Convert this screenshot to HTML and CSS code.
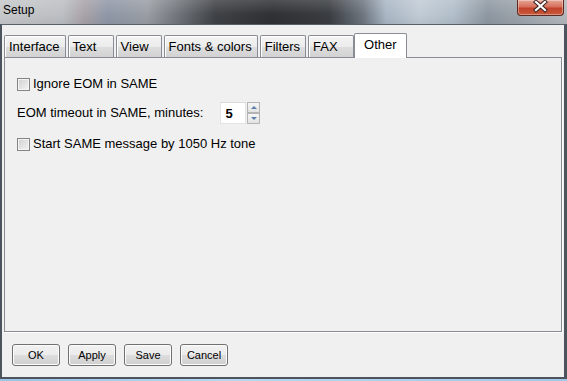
FILE: index.html
```html
<!DOCTYPE html>
<html lang="en">
<head>
    <meta charset="UTF-8">
    <title>Setup</title>
    <link rel="stylesheet" href="styles.css">
</head>
<body>
    <div class="window">
        <div class="titlebar">
            <span class="title">Setup</span>
            <div class="close">
                <svg width="47" height="16" viewBox="0 0 47 16">
                    <path d="M19 3 L28 11 M28 3 L19 11" stroke="#3a2420" stroke-width="4.2" stroke-linecap="square"/>
                    <path d="M19 3 L28 11 M28 3 L19 11" stroke="#ffffff" stroke-width="2.2" stroke-linecap="square"/>
                </svg>
            </div>
        </div>

        <div class="client">
            <div class="tabs">
                <div class="tab">Interface</div>
                <div class="tab">Text</div>
                <div class="tab">View</div>
                <div class="tab">Fonts &amp; colors</div>
                <div class="tab">Filters</div>
                <div class="tab">FAX</div>
                <div class="tab active">Other</div>
            </div>

            <div class="panel">
                <div class="row check-row">
                    <span class="checkbox"></span>
                    <span>Ignore EOM in SAME</span>
                </div>
                <div class="row spin-row">
                    <span>EOM timeout in SAME, minutes:</span>
                    <div class="spin">
                        <span class="spin-value">5</span>
                        <div class="spin-buttons">
                            <span class="spin-btn"><span class="arrow-up"></span></span>
                            <span class="spin-btn"><span class="arrow-down"></span></span>
                        </div>
                    </div>
                </div>
                <div class="row check-row last">
                    <span class="checkbox"></span>
                    <span>Start SAME message by 1050 Hz tone</span>
                </div>
            </div>

            <div class="buttons">
                <button>OK</button>
                <button>Apply</button>
                <button>Save</button>
                <button>Cancel</button>
            </div>
        </div>
    </div>
</body>
</html>
```

FILE: styles.css
```css
body, html {
    margin: 0;
    height: 100%;
}

body {
    background: linear-gradient(90deg, #9cc4e6, #b9d8f0 40%, #a4c8e8);
    font-family: "Liberation Sans", Arial, sans-serif;
    font-size: 13px;
    color: #000;
}

.window {
    width: 567px;
    height: 379px;
    display: flex;
    flex-direction: column;
}

/* blurred glass title bar */
.titlebar {
    height: 24px;
    display: flex;
    justify-content: space-between;
    align-items: flex-start;
    background:
        linear-gradient(rgba(255,255,255,0.15), rgba(255,255,255,0) 60%, rgba(0,0,0,0.05)),
        linear-gradient(90deg, #c6c8ca 0%, #bcbfc3 11%, #a9a2a8 15%, #8f98a8 19%, #9a9ea4 26%, #6c7076 32%, #3f4246 38%, #2f3134 48%, #3a3d41 58%, #6e7680 64%, #a9b6c4 68%, #c1cbd5 74%, #b2bec9 80%, #8e98a2 86%, #9ea5ac 92%, #b5babf 100%);
}

.title {
    font-size: 12px;
    padding: 3px 0 0 3px;
    line-height: 15px;
}

.close {
    width: 47px;
    height: 16px;
    margin-right: 3px;
    box-sizing: border-box;
    border: 1px solid #5b2a22;
    border-top: none;
    border-radius: 0 0 4px 4px;
    background: linear-gradient(#e6a595, #d6705c 45%, #c2412b 55%, #c85a3a);
    box-shadow: inset 0 0 0 1px rgba(255,255,255,0.35);
}

.close svg {
    display: block;
    margin: -1px 0 0 -1px;
}

.client {
    flex: 1;
    display: flex;
    flex-direction: column;
    background-color: #f0f0f0;
    border-top: 1px solid #59616b;
    border-left: 2px solid #4c545e;
    border-right: 3px solid #4c545e;
    border-bottom: 2px solid #4c545e;
}

.tabs {
    display: flex;
    align-items: flex-end;
    gap: 2px;
    height: 24px;
    margin: 8px 2px 0 2px;
}

.tab {
    box-sizing: border-box;
    height: 22px;
    min-width: 46px;
    padding: 3px 5px 0 4px;
    line-height: 15px;
    border: 1px solid #898c95;
    border-bottom: none;
    border-radius: 2px 2px 0 0;
    background: linear-gradient(#f4f4f4, #ececec 50%, #dedede 52%, #d2d2d2);
    box-shadow: inset 1px 1px 0 #fff;
    white-space: nowrap;
}

.tab.active {
    position: relative;
    z-index: 1;
    height: 25px;
    margin: 0 -2px -1px -2px;
    padding: 3px 9px 0 9px;
    background: #fff;
    box-shadow: none;
}

.panel {
    box-sizing: border-box;
    height: 275px;
    margin: 0 2px;
    padding: 18px 12px 0 12px;
    border: 1px solid #898c95;
    box-shadow: 1px 1px 0 #fff;
}

.row {
    display: flex;
    align-items: center;
    line-height: 16px;
    white-space: nowrap;
}

.check-row {
    height: 16px;
    gap: 3px;
}

.check-row.last {
    margin-top: 12px;
}

.checkbox {
    box-sizing: border-box;
    width: 13px;
    height: 13px;
    border: 1px solid #848484;
    background: linear-gradient(135deg, #d0d0d0, #f4f4f4);
    box-shadow: inset 0 0 0 1px #f4f4f4;
}

.spin-row {
    height: 22px;
    margin-top: 10px;
}

.spin {
    display: flex;
    margin-left: 17px;
}

.spin-value {
    box-sizing: border-box;
    width: 26px;
    height: 22px;
    padding: 3px 0 0 4px;
    background: #fff;
    border: 1px solid #e3e3e3;
    border-top-color: #dadada;
    font-weight: bold;
    line-height: 16px;
}

.spin-buttons {
    display: flex;
    flex-direction: column;
    margin-left: 1px;
}

.spin-btn {
    box-sizing: border-box;
    width: 13px;
    height: 11px;
    display: flex;
    justify-content: center;
    align-items: center;
    border: 1px solid #b4b4b4;
    background: linear-gradient(#f6f6f6, #e2e2e2);
}

.arrow-up {
    width: 0;
    height: 0;
    border-left: 3px solid transparent;
    border-right: 3px solid transparent;
    border-bottom: 3px solid #5a7fa8;
}

.arrow-down {
    width: 0;
    height: 0;
    border-left: 3px solid transparent;
    border-right: 3px solid transparent;
    border-top: 3px solid #5a7fa8;
}

.buttons {
    display: flex;
    gap: 8px;
    padding: 12px 0 0 10px;
}

button {
    box-sizing: border-box;
    width: 48px;
    height: 22px;
    padding: 0;
    font-family: "Liberation Sans", Arial, sans-serif;
    font-size: 11px;
    color: #000;
    border: 1px solid #707070;
    border-radius: 3px;
    background: linear-gradient(#f2f2f2, #ebebeb 50%, #dddddd 52%, #cfcfcf);
    box-shadow: inset 0 0 0 1px #fcfcfc;
}
```
